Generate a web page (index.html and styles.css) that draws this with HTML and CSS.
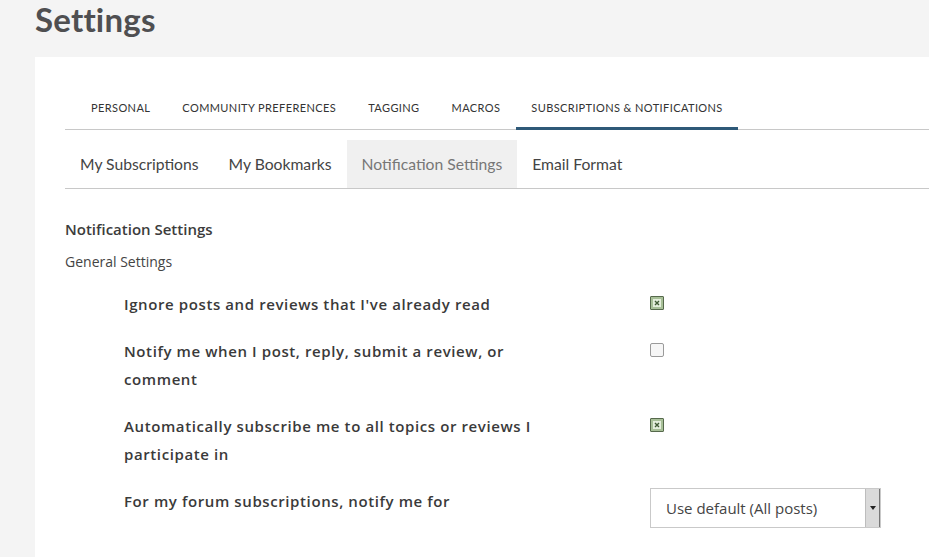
FILE: index.html
```html
<!DOCTYPE html>
<html>
  <head>
    <title>Settings</title>
    <link rel="stylesheet" href="styles.css">
  </head>
  <body>
    <h1 class="page-title">Settings</h1>

    <div class="card">
      <ul class="main-tabs">
        <li class="main-tab">PERSONAL</li>
        <li class="main-tab">COMMUNITY PREFERENCES</li>
        <li class="main-tab">TAGGING</li>
        <li class="main-tab">MACROS</li>
        <li class="main-tab main-tab-active">SUBSCRIPTIONS &amp; NOTIFICATIONS</li>
      </ul>

      <ul class="sub-tabs">
        <li class="sub-tab">My Subscriptions</li>
        <li class="sub-tab">My Bookmarks</li>
        <li class="sub-tab sub-tab-active">Notification Settings</li>
        <li class="sub-tab">Email Format</li>
      </ul>

      <p class="section-title">Notification Settings</p>
      <p class="section-subtitle">General Settings</p>

      <div class="setting-row">
        <div class="setting-label">Ignore posts and reviews that I've already read</div>
        <div class="setting-control">
          <span class="check check-on">
            <svg width="10" height="10" viewBox="0 0 10 10"><rect x="1" y="1" width="8" height="8" fill="#e4eedc"/><path d="M3 3 L7 7 M7 3 L3 7" stroke="#3f5a34" stroke-width="1.4"/></svg>
          </span>
        </div>
      </div>

      <div class="setting-row">
        <div class="setting-label">Notify me when I post, reply, submit a review, or comment</div>
        <div class="setting-control">
          <span class="check"></span>
        </div>
      </div>

      <div class="setting-row">
        <div class="setting-label">Automatically subscribe me to all topics or reviews I participate in</div>
        <div class="setting-control">
          <span class="check check-on">
            <svg width="10" height="10" viewBox="0 0 10 10"><rect x="1" y="1" width="8" height="8" fill="#e4eedc"/><path d="M3 3 L7 7 M7 3 L3 7" stroke="#3f5a34" stroke-width="1.4"/></svg>
          </span>
        </div>
      </div>

      <div class="setting-row">
        <div class="setting-label">For my forum subscriptions, notify me for</div>
        <div class="setting-control">
          <div class="select-box">
            <span class="select-text">Use default (All posts)</span>
            <span class="select-arrow">
              <svg width="6" height="4" viewBox="0 0 6 4"><path d="M0 0 L6 0 L3 4 Z" fill="#222"/></svg>
            </span>
          </div>
        </div>
      </div>
    </div>
  </body>
</html>
```

FILE: styles.css
```css
body {
  margin: 0;
  background-color: #f4f4f4;
  font-family: Lato, "Open Sans", sans-serif;
  color: #333;
  overflow: hidden;
}

.page-title {
  margin: 0;
  padding: 1px 0 0 35px;
  height: 56px;
  font-size: 33px;
  line-height: 36px;
  font-weight: bold;
  letter-spacing: 0.2px;
  color: #4f4f51;
}

.card {
  background-color: white;
  margin-left: 35px;
  padding: 30px 0 40px 30px;
  height: 430px;
}

.main-tabs {
  list-style: none;
  margin: 0;
  padding: 0 0 0 10px;
  display: flex;
  border-bottom: 1px solid #c8c8c8;
}

.main-tab {
  padding: 14px 16px 13px 16px;
  font-size: 11px;
  letter-spacing: 0.4px;
  color: #333;
  border-bottom: 3px solid transparent;
  margin-bottom: -1px;
}

.main-tab-active {
  border-bottom-color: #2e5978;
  padding-left: 15px;
  padding-right: 15px;
}

.sub-tabs {
  list-style: none;
  margin: 10px 0 0 0;
  padding: 0;
  display: flex;
  border-bottom: 1px solid #c8c8c8;
}

.sub-tab {
  padding: 0 15px;
  height: 48px;
  line-height: 48px;
  font-size: 15.7px;
  color: #444;
}

.sub-tab-active {
  background-color: #f0f0f0;
  color: #777;
}

.section-title {
  margin: 30px 0 0 0;
  font-family: "Open Sans", sans-serif;
  font-size: 15px;
  font-weight: 600;
  color: #3c3c3c;
}

.section-subtitle {
  margin: 13px 0 0 0;
  font-family: "Open Sans", sans-serif;
  font-size: 14px;
  color: #444;
}

.setting-row {
  display: flex;
  padding-left: 59px;
  margin-top: 19px;
}

.setting-label {
  width: 420px;
  font-family: "Open Sans", sans-serif;
  font-size: 15px;
  font-weight: 600;
  letter-spacing: 0.6px;
  line-height: 28px;
  color: #3a3a3a;
}

.setting-control {
  margin-left: 106px;
  padding-top: 6px;
}

.check {
  display: flex;
  align-items: center;
  justify-content: center;
  width: 12px;
  height: 12px;
  border: 1px solid #9a9a9a;
  border-radius: 2px;
  background-color: #f6f6f6;
}

.check-on {
  border-color: #56694c;
  background-color: #a8c098;
  border-radius: 1px;
}

.select-box {
  display: flex;
  width: 229px;
  height: 38px;
  margin-top: -5px;
  border: 1px solid #c9c9c9;
  background-color: white;
}

.select-text {
  flex: 1;
  padding-left: 15px;
  line-height: 38px;
  font-family: "Open Sans", sans-serif;
  font-size: 15px;
  color: #444;
}

.select-arrow {
  width: 13px;
  display: flex;
  align-items: center;
  justify-content: center;
  background-color: #dadada;
  border-left: 1px solid #bdbdbd;
  border-right: 1px solid #777;
}
```
